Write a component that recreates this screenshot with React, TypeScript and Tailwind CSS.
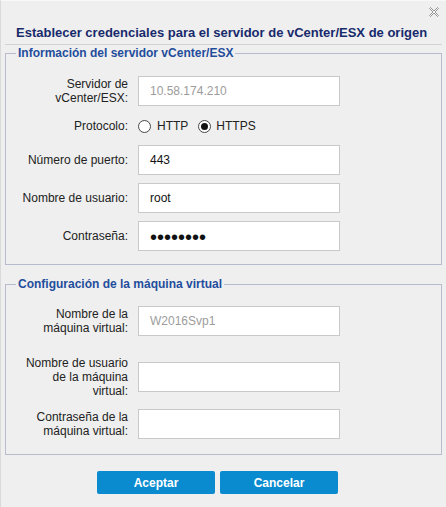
import React from "react";

type FieldProps = {
  label: React.ReactNode;
  value?: string;
  muted?: boolean;
  password?: boolean;
  className?: string;
};

function Field({ label, value, muted, password, className = "" }: FieldProps) {
  return (
    <div className={`flex items-center ${className}`}>
      <div className="w-[122px] text-right text-[12px] leading-[14px] text-[#222]">{label}</div>
      <div className="ml-[10px] flex h-[30px] w-[202px] items-center border border-[#c9c9c9] bg-white pl-[11px]">
        {password ? (
          <span className="text-[20px] leading-none text-[#111] mt-[2px]">••••••••</span>
        ) : (
          <span className={`text-[12px] leading-[14px] ${muted ? "text-[#9c9c9c]" : "text-[#111]"}`}>{value}</span>
        )}
      </div>
    </div>
  );
}

function Radio({ checked, className = "" }: { checked?: boolean; className?: string }) {
  return (
    <span
      className={`flex h-[13px] w-[13px] items-center justify-center rounded-full border border-[#474747] bg-white ${className}`}
    >
      {checked && <span className="h-[7px] w-[7px] rounded-full bg-[#111]" />}
    </span>
  );
}

export default function App() {
  return (
    <div className="h-[507px] w-[446px] overflow-hidden border-l border-t border-l-[#d9d9d9] border-t-[#f8f8f8] bg-[#efefef] font-['Liberation_Sans',Arial,sans-serif]">
      <div className="mt-[6px] flex justify-end pr-[7px]">
        <svg width="10" height="10" viewBox="0 0 10 10" className="block">
          <polygon
            points="0.5,1.5 1.5,0.5 5,4 8.5,0.5 9.5,1.5 6,5 9.5,8.5 8.5,9.5 5,6 1.5,9.5 0.5,8.5 4,5"
            fill="#fafafa"
            stroke="#8a8a8a"
            strokeWidth="0.9"
            strokeLinejoin="miter"
          />
        </svg>
      </div>
      <div className="mt-[8px] pl-[15px] text-[13px] font-bold leading-[16px] text-[#172a6c]">
        Establecer credenciales para el servidor de vCenter/ESX de origen
      </div>
      <div className="ml-[4px] mt-[3px] h-px w-[437px] bg-[#d3d3d3]" />

      <fieldset className="ml-[4px] mt-px w-[437px] border border-[#b7bbcd] pb-[13px] pt-[15px]">
        <legend className="ml-[10px] px-[2px] text-[12px] font-bold leading-[15px] text-[#1f4d9c]">
          Información del servidor vCenter/ESX
        </legend>
        <Field
          label={
            <>
              Servidor de
              <br />
              vCenter/ESX:
            </>
          }
          value="10.58.174.210"
          muted
        />
        <div className="mt-[9px] flex h-[22px] items-center text-[12px] text-[#222]">
          <div className="w-[122px] text-right">Protocolo:</div>
          <div className="ml-[10px] flex items-center">
            <Radio />
            <span className="ml-[6px]">HTTP</span>
            <Radio checked className="ml-[10px]" />
            <span className="ml-[5px]">HTTPS</span>
          </div>
        </div>
        <Field className="mt-[8px]" label="Número de puerto:" value="443" />
        <Field className="mt-[8px]" label="Nombre de usuario:" value="root" />
        <Field className="mt-[8px]" label="Contraseña:" password />
      </fieldset>

      <fieldset className="ml-[4px] mt-[12px] w-[437px] border border-[#b7bbcd] pb-[15px] pt-[14px]">
        <legend className="ml-[10px] px-[2px] text-[12px] font-bold leading-[15px] text-[#1f4d9c]">
          Configuración de la máquina virtual
        </legend>
        <Field
          label={
            <>
              Nombre de la
              <br />
              máquina virtual:
            </>
          }
          value="W2016Svp1"
          muted
        />
        <Field
          className="mt-[20px]"
          label={
            <>
              Nombre de usuario
              <br />
              de la máquina
              <br />
              virtual:
            </>
          }
        />
        <Field
          className="mt-[11px]"
          label={
            <>
              Contraseña de la
              <br />
              máquina virtual:
            </>
          }
        />
      </fieldset>

      <div className="ml-[96px] mt-[16px] flex gap-[5px]">
        <button className="h-[23px] w-[118px] rounded-[2px] bg-[#0a8bcf] text-[12px] font-bold text-white">
          Aceptar
        </button>
        <button className="h-[23px] w-[118px] rounded-[2px] bg-[#0a8bcf] text-[12px] font-bold text-white">
          Cancelar
        </button>
      </div>
    </div>
  );
}
